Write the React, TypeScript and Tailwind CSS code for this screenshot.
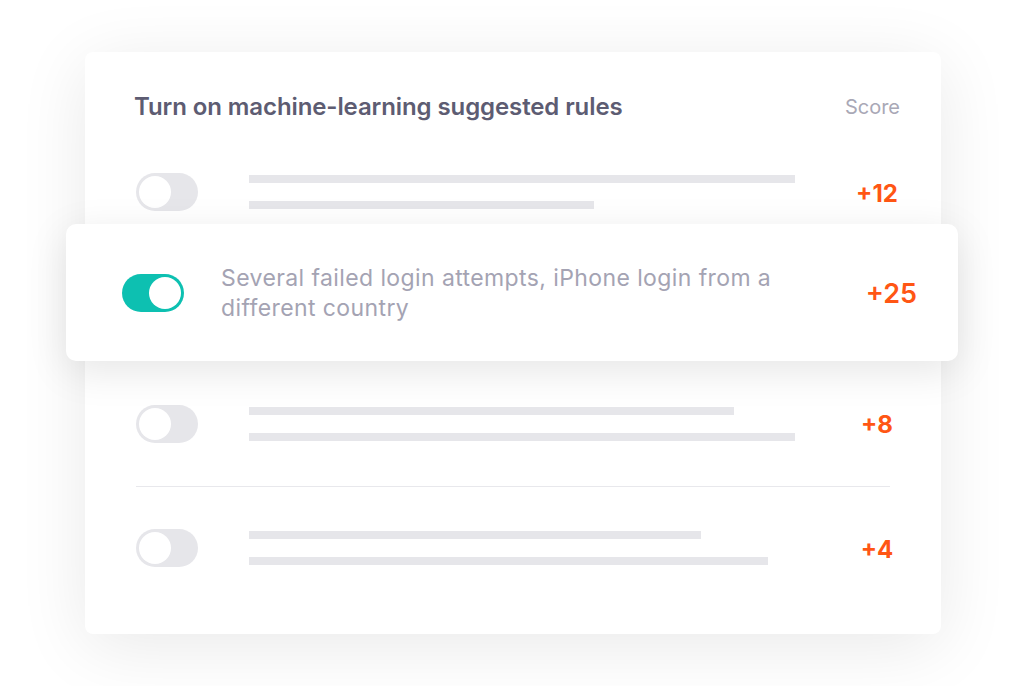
import React from "react";

const font = { fontFamily: "Inter, 'Noto Sans', sans-serif" };

function Toggle({ on = false }: { on?: boolean }) {
  return (
    <div
      className={
        "flex h-[38px] w-[62px] shrink-0 items-center rounded-full p-[3px] " +
        (on ? "justify-end bg-[#0dc0b1]" : "justify-start bg-[#e6e6ea]")
      }
    >
      <div className="h-[32px] w-[32px] rounded-full bg-white" />
    </div>
  );
}

function Bars({ a, b }: { a: number; b: number }) {
  return (
    <div className="flex flex-1 flex-col gap-[18px]">
      <div className="h-[8px] bg-[#e6e6ea]" style={{ width: a }} />
      <div className="h-[8px] bg-[#e6e6ea]" style={{ width: b }} />
    </div>
  );
}

function Row({ a, b, score, h }: { a: number; b: number; score: string; h: string }) {
  return (
    <div className={"flex items-center pl-[51px] pr-[34px] " + h}>
      <Toggle />
      <div className="ml-[51px] flex flex-1 items-center">
        <Bars a={a} b={b} />
        <span className="w-[60px] pt-[3px] text-center text-[24px] font-bold text-[#ff5614]">{score}</span>
      </div>
    </div>
  );
}

export default function App() {
  return (
    <div className="h-[686px] w-[1024px] bg-white pl-[85px] pt-[52px]" style={font}>
      <div className="flex w-[856px] flex-col rounded-[8px] bg-white pb-[25px] shadow-[0_12px_70px_rgba(0,0,0,0.09)]">
        {/* header */}
        <div className="flex h-[110px] items-center justify-between pl-[49px] pr-[41px]">
          <h2 className="text-[24px] font-semibold tracking-[-0.1px] text-[#5d5c72]">
            Turn on machine-learning suggested rules
          </h2>
          <span className="text-[20px] text-[#a9a8b6]">Score</span>
        </div>

        <Row a={546} b={345} score="+12" h="h-[60px]" />

        {/* highlighted rule */}
        <div className="relative z-10 -mr-[17px] -ml-[19px] mt-[2px] flex h-[137px] items-center rounded-[10px] bg-white pl-[56px] pr-[41px] shadow-[0_10px_40px_rgba(0,0,0,0.1)]">
          <Toggle on />
          <p className="ml-[37px] w-[580px] text-[23px] leading-[30px] tracking-[0.4px] text-[#a4a3b3]">
            Several failed login attempts, iPhone login from a different country
          </p>
          <span className="ml-auto pt-[3px] text-[27px] font-semibold text-[#ff5614]">+25</span>
        </div>

        <Row a={485} b={546} score="+8" h="h-[125px]" />
        <div className="mx-[51px] h-px bg-[#e8e8ec]" />
        <Row a={452} b={519} score="+4" h="h-[122px]" />
      </div>
    </div>
  );
}
